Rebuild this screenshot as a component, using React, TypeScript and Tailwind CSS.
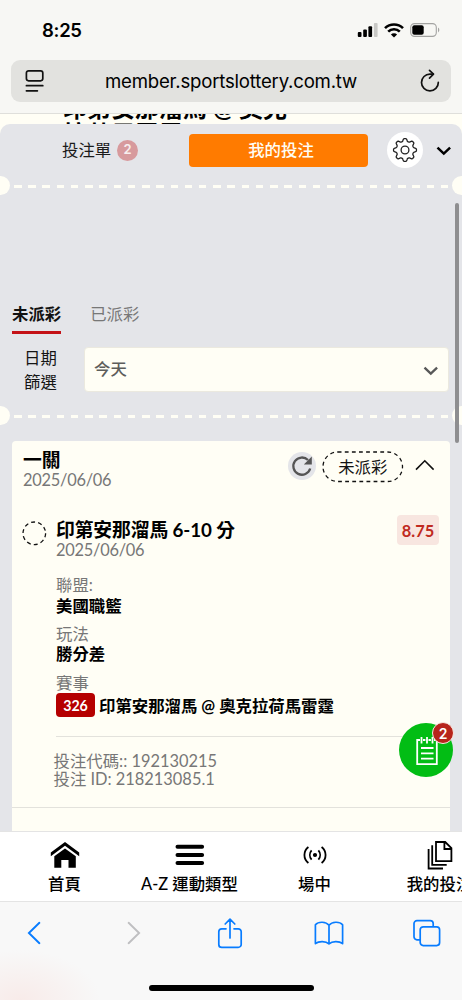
import type { ReactNode } from "react";

const GEAR_PATH =
  Array.from({ length: 96 }, (_, i) => {
    const angle = (i / 96) * Math.PI * 2;
    const radius = 10.1 + 1.45 * Math.tanh(1.8 * Math.cos(8 * angle));
    const x = 13 + radius * Math.cos(angle);
    const y = 13 + radius * Math.sin(angle);
    return `${i === 0 ? "M" : "L"}${x.toFixed(2)} ${y.toFixed(2)}`;
  }).join("") + "z";

function StatusBar() {
  return (
    <div className="flex h-[60px] items-center justify-between pl-[42px] pr-[22px] font-['Inter',sans-serif]">
      <span className="text-[18.5px] font-semibold leading-[22px] tracking-[-0.3px]">8:25</span>
      <div className="flex items-center">
        <svg width="21" height="14" viewBox="0 0 21 14">
          <rect x="0.8" y="9" width="3.7" height="5" rx="1" />
          <rect x="6.2" y="6.5" width="3.7" height="7.5" rx="1" />
          <rect x="11.4" y="3.3" width="3.7" height="10.7" rx="1" />
          <rect x="16.9" y="0" width="3.7" height="14" rx="1" fill="#c8c8c5" />
        </svg>
        <svg className="ml-[6px]" width="20" height="15" viewBox="0 0 20 15">
          <g fill="none" stroke="#000" strokeWidth="2.6">
            <path d="M1 5.2a12.8 12.8 0 0 1 18 0" />
            <path d="M4.2 8.7a8.2 8.2 0 0 1 11.6 0" />
          </g>
          <path d="M6.9 11.5a4.4 4.4 0 0 1 6.2 0L10 14.6z" />
        </svg>
        <svg className="ml-[6px]" width="30" height="14" viewBox="0 0 30 14">
          <rect x="0.7" y="0.6" width="25.6" height="12.8" rx="3.8" fill="none" stroke="#a3a3a1" strokeWidth="1.1" />
          <rect x="2.3" y="2.2" width="11.4" height="9.6" rx="2" />
          <path d="M28 4.6v4.8c1.8-.8 1.8-4 0-4.8z" fill="#a3a3a1" />
        </svg>
      </div>
    </div>
  );
}

function AddressBar() {
  return (
    <div className="mx-[11px] flex h-[42px] items-center justify-between rounded-[9px] bg-[#e2e2df] pl-[14px] pr-[11px]">
      <svg width="20" height="24" viewBox="0 0 20 24" fill="none" stroke="#111" strokeWidth="1.7" strokeLinecap="round">
        <rect x="1.4" y="1.8" width="16.4" height="10" rx="2.2" />
        <path d="M1.4 16.7h16.4M1.4 21.8h11" />
      </svg>
      <span className="-ml-[3px] font-['Inter',sans-serif] text-[18.6px] leading-6 tracking-[-0.2px]">member.sportslottery.com.tw</span>
      <svg width="20" height="24" viewBox="0 0 20 24" fill="none" stroke="#111" strokeWidth="1.7" strokeLinecap="round" strokeLinejoin="round">
        <path d="M18.3 13.4A8.4 8.4 0 1 1 10 5.1h3.2" />
        <path d="M9.5 1.4l4 3.8-4 3.9" />
      </svg>
    </div>
  );
}

function TearLine() {
  return (
    <div className="flex h-[19px] items-center justify-between overflow-hidden">
      <div className="h-[19px] w-[10px] rounded-r-full bg-[#fffef5]" />
      <div className="mt-[2px] h-[3px] w-[435px] bg-[repeating-linear-gradient(90deg,#fffef5_0px,#fffef5_7.5px,transparent_7.5px,transparent_14.23px)]" />
      <div className="h-[19px] w-[10px] rounded-l-full bg-[#fffef5]" />
    </div>
  );
}

function PanelHeader() {
  return (
    <div className="flex h-[52px] items-center">
      <div className="ml-[62px] flex w-[127px] items-center">
        <span className="text-[16.4px] leading-6 text-[#1b1b1b]">投注單</span>
        <span className="ml-[6px] flex size-[21px] items-center justify-center rounded-full bg-[#d79a9d] font-['Inter'] text-[13px] font-semibold text-[#f7eeee]">2</span>
      </div>
      <button className="h-[33px] w-[179px] rounded-[4px] bg-[#ff7b00] pl-[5px] text-[16.4px] font-medium leading-[32px] text-[#fffdf4]">我的投注</button>
      <div className="ml-[19px] flex size-[36px] items-center justify-center rounded-full bg-white">
        <svg width="26" height="26" viewBox="0 0 26 26" fill="none" stroke="#222" strokeWidth="1.3" strokeLinejoin="round">
          <circle cx="13" cy="13" r="3.9" />
          <path d={GEAR_PATH} />
        </svg>
      </div>
      <svg className="ml-[13px] mt-[2px]" width="16" height="12" viewBox="0 0 16 12" fill="none" stroke="#000" strokeWidth="2.5">
        <path d="M1.5 2.6l6.3 6 6.3-6" />
      </svg>
    </div>
  );
}

function Filters() {
  return (
    <div className="h-[211px] pt-[106px]">
      <div className="ml-3 flex h-[33px] gap-[29px] text-[16.4px] leading-[25px]">
        <span className="h-[33px] border-b-[3px] border-[#c41217] font-bold text-[#111]">未派彩</span>
        <span className="text-[#777]">已派彩</span>
      </div>
      <div className="mt-[13px] flex">
        <div className="-mt-px w-[84px] pl-[24px] text-[16.4px] leading-6 text-[#151515]">
          <div>日期</div>
          <div>篩選</div>
        </div>
        <div className="flex h-[45px] w-[365px] items-center justify-between rounded-[4px] border border-[#ebe9df] bg-[#fffef5] pl-[9px] pr-[9px] text-[16.4px] font-medium text-[#5d5d5b]">
          今天
          <svg className="mt-[2px]" width="16" height="12" viewBox="0 0 16 12" fill="none" stroke="#585858" strokeWidth="2.3">
            <path d="M1.5 2.6l6.3 6 6.3-6" />
          </svg>
        </div>
      </div>
    </div>
  );
}

function Field({ label, value }: { label: string; value: string }) {
  return (
    <div className="h-[48.5px] text-[16.4px] leading-[20.5px]">
      <div className="text-[#777]">{label}</div>
      <div className="font-bold">{value}</div>
    </div>
  );
}

function BetCard() {
  return (
    <div className="ml-3 h-[390px] w-[438px] overflow-hidden rounded-t-[4px] bg-[#fffef5]">
      <div className="flex h-[78px] pl-[11px] pt-[8px]">
        <div className="w-[265px]">
          <div className="text-[18.8px] font-bold leading-[22px]">一關</div>
          <div className="text-[16.4px] leading-[18px] tracking-[-0.25px] text-[#777]">2025/06/06</div>
        </div>
        <div className="mt-px flex h-[32px] items-center">
          <div className="flex size-[28px] items-center justify-center rounded-full bg-[#e4e5e9]">
            <svg width="22" height="22" viewBox="0 0 22 22">
              <path d="M19.2 13.5A8.6 8.6 0 1 1 17 5" fill="none" stroke="#555" strokeWidth="2.3" />
              <path d="M20.8 1.5v8h-8z" fill="#555" />
            </svg>
          </div>
          <svg className="ml-[6px] mt-[2px]" width="82" height="32" viewBox="0 0 82 32">
            <rect x="1" y="1" width="79.5" height="29.5" rx="14.7" fill="none" stroke="#111" strokeWidth="1.3" strokeDasharray="3.8 3.3" />
            <text x="40.8" y="22" textAnchor="middle" fontSize="16.4" fill="#111">未派彩</text>
          </svg>
          <svg className="-mt-[3px] ml-[11px]" width="20" height="12" viewBox="0 0 20 12" fill="none" stroke="#111" strokeWidth="1.6">
            <path d="M1 10.6L9.8 1.8l8.8 8.8" />
          </svg>
        </div>
      </div>
      <div className="flex h-[40px]">
        <svg className="ml-[10px] mt-[2px]" width="25" height="25" viewBox="0 0 25 25">
          <circle cx="12.3" cy="12.3" r="11.3" fill="none" stroke="#111" strokeWidth="1.3" strokeDasharray="4 3.1" />
        </svg>
        <div className="ml-[9px] w-[341px]">
          <div className="text-[18.8px] font-bold leading-[22px] tracking-[-0.1px]">印第安那溜馬 6-10 分</div>
          <div className="text-[16.4px] leading-[17px] tracking-[-0.25px] text-[#777]">2025/06/06</div>
        </div>
        <div className="-mt-[4px] h-[30px] w-[42px] rounded-[4px] bg-[#f8e6e0] text-center text-[16.4px] font-bold leading-[31px] text-[#c02a20]">8.75</div>
      </div>
      <div className="ml-[44px] mt-[16px]">
        <Field label="聯盟:" value="美國職籃" />
        <Field label="玩法" value="勝分差" />
        <div className="text-[16.4px] leading-[21px] text-[#777]">賽事</div>
        <div className="flex h-[24px] items-center">
          <span className="h-[24px] w-[39px] rounded-[4px] bg-[#b50000] text-center text-[14.2px] font-bold leading-[25px] text-white">326</span>
          <span className="ml-[4px] mt-px whitespace-nowrap text-[16.4px] font-bold leading-6">印第安那溜馬 @ 奧克拉荷馬雷霆</span>
        </div>
        <div className="mr-3 mt-[19px] h-px bg-[#e3e2dc]" />
      </div>
      <div className="ml-[41.5px] mt-[15px] text-[16.4px] leading-[18px] text-[#777]">
        <div>投注代碼:: 192130215</div>
        <div>投注 ID: 218213085.1</div>
      </div>
      <div className="mt-[19px] h-px bg-[#e3e2dc]" />
    </div>
  );
}

function BetSlipButton() {
  return (
    <div className="absolute left-[399px] top-[723px] flex size-[54px] items-center justify-center rounded-full bg-[#02bd14]">
      <svg className="mt-[2px] ml-px" width="24" height="30" viewBox="0 0 24 30" fill="none" stroke="#fff" strokeWidth="1.8">
        <path d="M5 4H2.2v24.2h19.6V4H19M8 4h2.4M13.5 4h2.4M6.5 1v6.5M12 1v6.5M17.5 1v6.5M6 12h12.5M6 17.3h12.5M6 22.6h12.5" />
      </svg>
      <span className="absolute left-[33px] top-[-1px] flex size-[22px] items-center justify-center rounded-full border border-[#f7e9e2] bg-[#b7251c] font-['Inter'] text-[14px] font-semibold text-white">2</span>
    </div>
  );
}

function NavItem({ label, children }: { label: string; children: ReactNode }) {
  return (
    <div className="flex w-[125px] shrink-0 flex-col items-center">
      <div className="flex h-[34px] items-center">{children}</div>
      <span className="whitespace-nowrap text-[16.4px] font-medium leading-6">{label}</span>
    </div>
  );
}

function SiteNav() {
  return (
    <nav className="flex h-[71px] overflow-hidden border-y border-[#e4e4e4] bg-white pl-[2px] pt-[6px]">
      <NavItem label="首頁">
        <svg width="30" height="28" viewBox="0 0 30 28">
          <path d="M.8 11.6L15 .9l14.2 10.7v3.7L15 4.8.8 15.3z" />
          <path d="M4.3 15.2L15 7.6l10.8 7.6v11.5h-7.3v-7.6h-7.2v7.6h-7z" />
        </svg>
      </NavItem>
      <NavItem label="A-Z 運動類型">
        <svg width="30" height="22" viewBox="0 0 30 22" stroke="#000" strokeWidth="4" strokeLinecap="round">
          <path d="M2.5 2.8h24.6M2.5 11h24.6M2.5 19.1h24.6" />
        </svg>
      </NavItem>
      <NavItem label="場中">
        <svg width="24" height="18" viewBox="0 0 24 18" fill="none" stroke="#000" strokeWidth="1.8">
          <circle cx="12" cy="9" r="1.2" fill="#000" />
          <path d="M8.6 4.4a7 7 0 0 0 0 9.2M15.4 4.4a7 7 0 0 1 0 9.2M5.4 1c-5.3 4.2-5.3 11.8 0 16M18.6 1c5.3 4.2 5.3 11.8 0 16" />
        </svg>
      </NavItem>
      <NavItem label="我的投注">
        <svg width="26" height="30" viewBox="0 0 26 30" fill="none" stroke="#000" strokeWidth="1.8">
          <path d="M9 2h9.2l6.2 6.2v13H9zM17.4 2v7h7M5.2 5.2v19.6h14.5M1.6 9v19.5H16" />
        </svg>
      </NavItem>
    </nav>
  );
}

function BrowserToolbar() {
  return (
    <div className="flex h-[98px] flex-col items-center overflow-hidden bg-[radial-gradient(ellipse_80px_50px_at_20px_100%,#f8ebe9,#f8f8f8)]">
      <div className="-ml-px grid h-[62px] w-[491px] shrink-0 grid-cols-5 place-items-center text-[#087cff]">
        <svg width="14" height="24" viewBox="0 0 14 24" fill="none" stroke="currentColor" strokeWidth="1.9" strokeLinecap="round">
          <path d="M12.4 1.8L1.9 12l10.5 10.2" />
        </svg>
        <svg className="ml-[4px]" width="14" height="24" viewBox="0 0 14 24" fill="none" stroke="#bfbfc1" strokeWidth="1.9" strokeLinecap="round">
          <path d="M1.6 1.8L12.1 12 1.6 22.2" />
        </svg>
        <svg width="26" height="32" viewBox="0 0 26 32" fill="none" stroke="currentColor" strokeWidth="1.7" strokeLinecap="round" strokeLinejoin="round">
          <path d="M9 11.8H4.8a3 3 0 0 0-3 3v12.6a3 3 0 0 0 3 3h16.4a3 3 0 0 0 3-3V14.8a3 3 0 0 0-3-3H17M13 21V2.4M8.2 7L13 2.2 17.8 7" />
        </svg>
        <svg width="30" height="24" viewBox="0 0 30 24" fill="none" stroke="currentColor" strokeWidth="1.7" strokeLinejoin="round">
          <path d="M15 4.2C12 .5 4.5.2 1.4 3.8v18.8c3.4-2.7 10.4-2.6 13.6.2 3.2-2.8 10.2-2.9 13.6-.2V3.8C25.5.2 18 .5 15 4.2zM15 4.2v18.6" />
        </svg>
        <svg width="29" height="28" viewBox="0 0 29 28" fill="none" stroke="currentColor" strokeWidth="1.7">
          <rect x="8.2" y="7.8" width="19.4" height="18.8" rx="3" />
          <path d="M8 20.8H5a3 3 0 0 1-3-3V4.6a3 3 0 0 1 3-3h13.2a3 3 0 0 1 3 3v3" />
        </svg>
      </div>
      <div className="mt-[21px] h-[6px] w-[165px] shrink-0 rounded-full bg-black" />
    </div>
  );
}

export default function App() {
  return (
    <div className="relative h-[1000px] w-[462px] overflow-hidden bg-[#fffef5] font-['Lato','Noto_Sans_CJK_TC',sans-serif] text-black">
      <header className="h-[114px] border-b border-[#dfdfdb] bg-[#f7f7f4]">
        <StatusBar />
        <AddressBar />
      </header>
      <div className="flex h-[10px] flex-col overflow-hidden pl-[63px] text-[24px] font-bold">
        <div className="-mt-[17px] h-[24px] shrink-0 whitespace-nowrap leading-[22px]">印第安那溜馬 @ 奧克</div>
        <div className="h-[24px] shrink-0 leading-[26px]">拉荷馬雷霆</div>
      </div>
      <main className="h-[707px] rounded-t-[10px] bg-[#e4e5e9]">
        <PanelHeader />
        <TearLine />
        <Filters />
        <TearLine />
        <div className="h-[16px]" />
        <BetCard />
      </main>
      <SiteNav />
      <BrowserToolbar />
      <div className="absolute left-[455px] top-[203px] h-[240px] w-[4px] rounded-full bg-[#8e8e90]" />
      <BetSlipButton />
    </div>
  );
}
